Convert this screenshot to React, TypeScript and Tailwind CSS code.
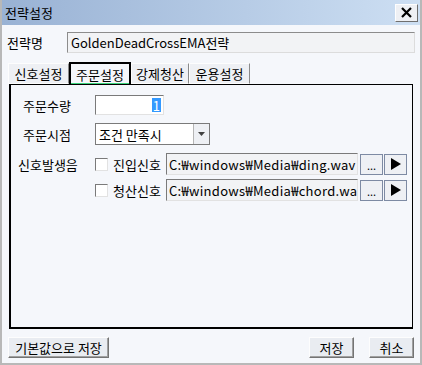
export default function App() {
  const font = { fontFamily: '"Noto Sans CJK KR", "Liberation Sans", sans-serif' };

  return (
    <div
      className="w-[422px] h-[365px] flex flex-col bg-[#f5f7fb] border-x-2 border-b-2 border-[#b8b8b8] text-[12px] text-black leading-none"
      style={font}
    >
      {/* Title bar */}
      <div className="h-[25px] shrink-0 flex items-center justify-between pl-[3px] pr-[2px] bg-gradient-to-r from-[#99b2d4] to-[#cddff3]">
        <span className="text-[13px]">전략설정</span>
        <button className="w-[23px] h-[18px] flex items-center justify-center bg-[#eef0f4] border border-[#6f6f6f] border-t-[#fefefe] border-l-[#fefefe]">
          <svg width="11" height="11" viewBox="0 0 11 11">
            <path d="M1 1 L10 10 M10 1 L1 10" stroke="black" strokeWidth="2.2" />
          </svg>
        </button>
      </div>

      {/* Strategy name */}
      <div className="flex items-center mt-[7px] pl-[5px] pr-[5px]">
        <span className="w-[60px] text-[13px]">전략명</span>
        <div className="flex-1 h-[21px] flex items-center px-[3px] bg-[#f2f3f5] border border-[#8c8c8c] border-b-[#dcdcdc] border-r-[#dcdcdc] text-[13px]">
          GoldenDeadCrossEMA전략
        </div>
      </div>

      {/* Tabs */}
      <div className="flex mt-[9px] pl-[6px] h-[22px] items-end">
        <div className="h-[21px] w-[61px] flex items-center justify-center bg-[#eef0f4] border border-[#fdfdfd] border-r-[#8a8a8a] text-[13px]">신호설정</div>
        <div className="h-[22px] w-[62px] flex items-center justify-center bg-[#f5f7fb] border-2 border-b-0 border-black text-[13px] relative">
          주문설정
          <span className="absolute left-0 right-0 bottom-0 h-[1px] bg-[#3bd47a]" />
        </div>
        <div className="h-[21px] w-[58px] flex items-center justify-center bg-[#eef0f4] border border-[#fdfdfd] border-r-[#8a8a8a] text-[13px]">강제청산</div>
        <div className="h-[21px] w-[61px] flex items-center justify-center bg-[#eef0f4] border border-[#fdfdfd] border-r-[#8a8a8a] text-[13px]">운용설정</div>
      </div>

      {/* Panel */}
      <div className="mx-[7px] h-[245px] border border-l-2 border-b-2 border-black bg-[#f5f7fb] flex flex-col pt-[10px] pl-[7px] gap-[6px]">
        <div className="flex items-center h-[20px]">
          <span className="w-[77px] pl-[5px] text-[13px]">주문수량</span>
          <div className="w-[69px] h-[20px] flex items-center justify-end pr-[2px] bg-white border border-[#7a7a7a] border-b-[#e2e2e2] border-r-[#e2e2e2]">
            <span className="bg-[#3399ff] text-white px-[1px] h-[14px] flex items-center text-[13px]">1</span>
          </div>
        </div>

        <div className="flex items-center h-[22px] mt-[2px]">
          <span className="w-[77px] pl-[5px] text-[13px]">주문시점</span>
          <div className="w-[115px] h-[22px] flex items-stretch bg-white border border-[#7a7a7a]">
            <span className="flex-1 flex items-center pl-[3px] text-[13px]">조건 만족시</span>
            <span className="w-[16px] flex items-center justify-center bg-[#eef0f4] border-l border-[#b5b5b5]">
              <svg width="7" height="4" viewBox="0 0 7 4">
                <path d="M0 0 L7 0 L3.5 4 Z" fill="#404040" />
              </svg>
            </span>
          </div>
        </div>

        <div className="flex mt-[2px]">
          <span className="w-[77px] pt-[5px] text-[13px]">신호발생음</span>
          <div className="flex flex-col gap-[4px]">
            <SoundRow label="진입신호" path="C:₩windows₩Media₩ding.wav" />
            <SoundRow label="청산신호" path="C:₩windows₩Media₩chord.wav" />
          </div>
        </div>
      </div>

      {/* Bottom buttons */}
      <div className="flex items-center mt-[8px] pl-[6px] pr-[6px]">
        <Btn className="w-[101px]">기본값으로 저장</Btn>
        <div className="flex-1" />
        <Btn className="w-[45px]">저장</Btn>
        <Btn className="w-[45px] ml-[15px]">취소</Btn>
      </div>
    </div>
  );
}

function SoundRow({ label, path }: { label: string; path: string }) {
  return (
    <div className="flex items-center h-[22px]">
      <span className="w-[13px] h-[13px] bg-white border border-[#7a7a7a] border-b-[#e2e2e2] border-r-[#e2e2e2]" />
      <span className="ml-[5px] w-[53px] text-[13px]">{label}</span>
      <div className="w-[192px] h-[22px] flex items-center pl-[2px] overflow-hidden whitespace-nowrap bg-[#f2f3f5] border border-[#7a7a7a] border-b-[#e2e2e2] border-r-[#e2e2e2] text-[13px] tracking-[0.3px]">
        {path}
      </div>
      <button className="ml-[2px] w-[23px] h-[21px] flex items-end justify-center pb-[3px] bg-[#eef0f4] border border-[#7d8aa3] text-[11px]">
        ...
      </button>
      <button className="ml-[1px] w-[23px] h-[21px] flex items-center justify-center bg-[#eef0f4] border border-[#7d8aa3]">
        <svg width="10" height="12" viewBox="0 0 10 12">
          <path d="M0 0 L10 6 L0 12 Z" fill="black" />
        </svg>
      </button>
    </div>
  );
}

function Btn({ children, className }: { children: React.ReactNode; className?: string }) {
  return (
    <button
      className={`h-[21px] flex items-center justify-center bg-[#e9ecf1] border border-[#747474] border-t-[#fdfdfd] border-l-[#fdfdfd] shadow-[inset_-1px_-1px_0_#a0a0a0] text-[13px] ${className ?? ""}`}
    >
      {children}
    </button>
  );
}
